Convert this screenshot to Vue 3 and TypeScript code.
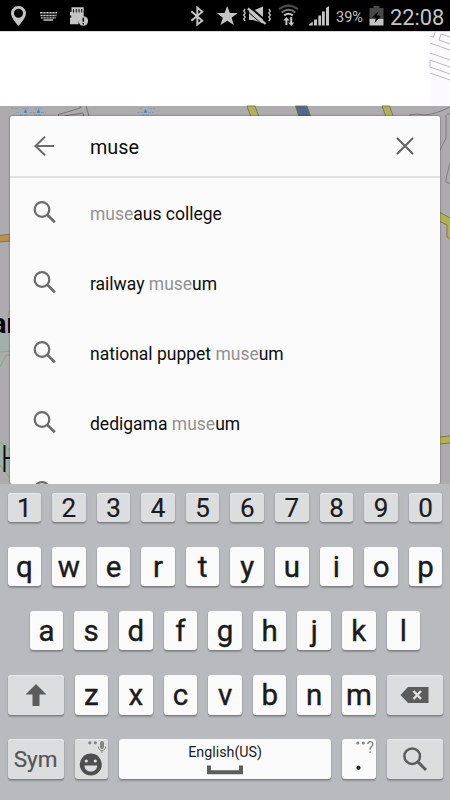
<script setup lang="ts">
interface Part {
  text: string
  typed: boolean
}

const suggestions: Part[][] = [
  [{ text: 'muse', typed: true }, { text: 'aus college', typed: false }],
  [{ text: 'railway ', typed: false }, { text: 'muse', typed: true }, { text: 'um', typed: false }],
  [{ text: 'national puppet ', typed: false }, { text: 'muse', typed: true }, { text: 'um', typed: false }],
  [{ text: 'dedigama ', typed: false }, { text: 'muse', typed: true }, { text: 'um', typed: false }],
  [],
]

const digits: string[] = [...'1234567890']
const topRow: string[] = [...'qwertyuiop']
const homeRow: string[] = [...'asdfghjkl']
const bottomRow: string[] = [...'zxcvbnm']
</script>

<template>
  <div class="screen">
    <header class="status">
      <svg class="status-icons" width="110" height="31" viewBox="0 0 110 31" fill="#c4c4c4">
        <path fill-rule="evenodd" d="M18.500 6C14.300 6 11 9.300 11 13.300C11 18.500 18.500 26 18.500 26S26 18.500 26 13.300C26 9.300 22.700 6 18.500 6ZM18.500 8.800A4.500 4.500 0 1 1 18.500 17.800A4.500 4.500 0 0 1 18.500 8.800Z" />
        <path d="M40 12h17v1.500H40zM40.500 14.800h16v1.500h-16zM41 17.300h15v1.200H41zM43.500 19.300h9.500v1.500h-9.500z" />
        <path d="M43 12v7M46 12v7M49 12v7M52 12v7M55 12v7" stroke="#000" stroke-width=".6" />
        <path d="M71.500 7.300h12.200v10.200c-3.500 0-5.500 2.500-5.200 6.700H70v-6.500h1.200v-2.200H70v-3.500h1.500z" />
        <path d="M73.500 9v3.500M76.200 9v3.500M79 9v3.500M81.700 9v3.500" stroke="#000" stroke-width="1" />
        <circle cx="83.300" cy="21" r="4.800" />
        <path d="M83.300 17.700v4M83.300 22.900v1.500" stroke="#000" stroke-width="1.500" />
      </svg>
      <div class="status-right">
        <svg width="146" height="31" viewBox="187 0 146 31" fill="#c4c4c4">
          <path d="M191.300 11.200l11 9.500-5 3.800V7.500l5 4.200-11 9" fill="none" stroke="#c4c4c4" stroke-width="1.900" />
          <path d="M227.200 6l2.700 7h7.700l-6 4.700 2.300 7.300-6.700-4.300-6.700 4.300 2.300-7.300-6-4.700h7.700z" />
          <path d="M245.200 9l-1.500 2 1.500 2-1.500 2 1.500 2-1.500 2 1.500 2M268.800 9l1.500 2-1.500 2 1.500 2-1.500 2 1.500 2-1.500 2" fill="none" stroke="#c4c4c4" stroke-width="1.300" />
          <path d="M249 10.500h4.500l9.500-4v17l-9.500-3.500H249z" />
          <path d="M249.400 6.500L267.800 22.500" stroke="#000" stroke-width="1.800" />
          <path d="M246.500 10.500L263.500 25.500" stroke="#000" stroke-width="1" />
          <path d="M247.900 8.400L265.600 24" stroke="#c4c4c4" stroke-width="2.200" />
          <g fill="none" stroke-width="2">
            <path d="M279 9.300Q288.500 2 298 9.300" stroke="#4c4c4c" />
            <path d="M281.700 12.500Q288.500 7 295.300 12.500" stroke="#777" />
            <path d="M284.300 15.500Q288.500 12 292.700 15.500" stroke="#c4c4c4" />
          </g>
          <path d="M286.300 17l3.200 3.500h-2.100V25h-2v-4.500h-2.100zM291.300 26l-3.200-3.500h2.100V17h2v5.500h2.100z" />
          <path d="M309 25.500v-1l3.800-3v4zM314 25.500v-6h3v6zM318.300 25.500v-10h2.800v10zM322 25.500V11.500h2.800v14zM326 25.500V8l3-2v19.500z" />
        </svg>
        <span class="percent">39%</span>
        <svg class="battery" width="15" height="31" viewBox="0 0 15 31">
          <path d="M.5 8h4V6h6v2h4v11H.5z" fill="#484848" />
          <path d="M.5 19h14v6.500H.5z" fill="#c4c4c4" />
          <path d="M9.500 11l-6.500 6.500 4 .2L5.500 23l6.500-7-4-.4z" fill="#000" />
        </svg>
        <span class="clock">22:08</span>
      </div>
    </header>

    <main class="content">
      <svg class="map" width="450" height="453" viewBox="0 31 450 453">
        <path fill="#fff" d="M0 31h450v75H0z" />
        <path fill="#fdfaff" d="M430 31h20v75h-20z" />
        <path fill="#d9d9d9" d="M0 31h450v1H0z" />
        <path d="M433 38l2.500-6.500M430 36l3.500 1M441 34l9 3M441 34l-2 6 11 4M430 43l20 7M430 53l20 7M430 60v7M430 60l20 7M430 67l20 7M430 73l20 7" fill="none" stroke="#aaa" stroke-width=".8" />
        <path fill="#aeabaf" d="M0 106h450v378H0z" />
        <g stroke="#518bc3" stroke-width=".8">
          <path d="M11 108.500h7m4 0h8m4 0h9M16 112.500h5m8 0h7m5 0h5M20 115h7m7 0h8M139 108.500h3m7 0h6M137 112.500h6m5 0h6M142 115h8" stroke-dasharray="3 1" opacity=".5" />
          <path d="M24 112.500l1.500-3 1.500 3zM37 112.500l1.500-3 1.500 3zM144 112.500l1.500-3 1.500 3z" fill="#3f83bf" />
        </g>
        <path d="M58.500 117v-2.500l22-6.500-.500-2M86 106l3 10M64 117v-1l19-3 .5 3" fill="none" stroke="#68666a" stroke-width=".8" />
        <g stroke="#6f6b50" stroke-width=".8">
          <path d="M247 106h8l4 11h-8z" fill="#b3b253" />
          <path d="M295.500 106H307l4 11h-12z" fill="#53678d" />
          <path d="M382 106h7.500l4 11h-7.500z" fill="#b3b253" />
          <path d="M-1 235.500l12-1.500v7l-12 1z" fill="#bc914a" />
          <path d="M439 212l12 6.500v21.500l-4-3v-12l-8-4z" fill="#b3b253" />
          <path d="M439 437l12-1v7l-12 1z" fill="#b3b253" />
        </g>
        <path d="M409 115q8-2 16 0 11-1 25-8M446 115v23l-7 14M451 114h-4M451 160q-4 13-5 20-1 4 5 3" fill="none" stroke="#747277" stroke-width=".8" />
        <path d="M0 334h10v17H0zM0 440l10 6v32l-10-13z" fill="#a2b0ac" />
        <path d="M0 352l10-1M0 367l6-12h4M7 317l3-6M0 442l10 8M0 465l10 13" fill="none" stroke="#69b26e" stroke-width=".8" />
        <path d="M4.500 445v27M4.500 458h5.500" stroke="#111" stroke-width="2" fill="none" />
        <text x="-8.500" y="333" class="map-label">ar</text>
      </svg>

      <section class="search-card">
        <div class="search-bar">
          <svg class="back" width="22" height="20" viewBox="0 0 22 20" fill="none" stroke="#6b6b6b" stroke-width="2">
            <path d="M20 10H2M11 .8L1.500 10l9.500 9.200" />
          </svg>
          <span class="query">muse</span>
          <svg class="clear" width="18" height="18" viewBox="0 0 18 18" fill="none" stroke="#626262" stroke-width="2">
            <path d="M1 1l16 16M17 1L1 17" />
          </svg>
        </div>
        <ul class="suggestions">
          <li v-for="(parts, i) in suggestions" :key="i">
            <svg width="24" height="24" viewBox="0 0 24 24" fill="none" stroke="#6b6b6b">
              <circle cx="9" cy="8.500" r="7.300" stroke-width="2.200" />
              <path d="M14 13.500l7.800 7.800" stroke-width="2.700" />
            </svg>
            <span class="line"><span v-for="(part, j) in parts" :key="j" :class="{ typed: part.typed }">{{ part.text }}</span></span>
          </li>
        </ul>
      </section>
    </main>

    <section class="keyboard">
      <div class="row numbers">
        <div v-for="key in digits" :key="key" class="key grey">{{ key }}</div>
      </div>
      <div class="row">
        <div v-for="key in topRow" :key="key" class="key">{{ key }}</div>
      </div>
      <div class="row home">
        <div v-for="key in homeRow" :key="key" class="key">{{ key }}</div>
      </div>
      <div class="row">
        <div class="key grey wide icon">
          <svg width="22" height="24" viewBox="0 0 22 24" fill="#5c5c5c"><path d="M11 1l10.500 10.500h-7V23H7.500V11.500h-7z" /></svg>
        </div>
        <div v-for="key in bottomRow" :key="key" class="key">{{ key }}</div>
        <div class="key grey wide icon">
          <svg width="29" height="18" viewBox="0 0 29 18"><path d="M8 1h20.500v16H8L.500 9z" fill="#5c5c5c" /><path d="M13.500 5l7.500 8M21 5l-7.500 8" stroke="#dedfe1" stroke-width="2.500" /></svg>
        </div>
      </div>
      <div class="row">
        <div class="key grey wide sym">Sym</div>
        <div class="key grey icon">
          <svg width="34" height="40" viewBox="0 0 34 40" fill="#4f4f4f">
            <g fill="#858585"><circle cx="15.800" cy="3.800" r="1.600" /><circle cx="21.300" cy="3.800" r="1.600" /><rect x="26" y="2" width="4" height="8" rx="2" /></g>
            <path d="M24.300 7.500c0 5.300 7.400 5.300 7.400 0M28 11.500V14" fill="none" stroke="#858585" />
            <circle cx="16.800" cy="25.500" r="11" />
            <g fill="#dedfe1"><circle cx="12.300" cy="22" r="1.600" /><circle cx="21.300" cy="22" r="1.600" /><path d="M10.500 26.500h12.600c0 8-12.600 8-12.600 0z" /></g>
          </svg>
        </div>
        <div class="key space">
          <span>English(US)</span>
          <svg width="36" height="10" viewBox="0 0 36 10"><path d="M2 .5v6.800h32V.5" fill="none" stroke="#5c5c5c" stroke-width="4" /></svg>
        </div>
        <div class="key icon">
          <svg width="34" height="40" viewBox="0 0 34 40">
            <circle cx="15.800" cy="4" r="1.600" fill="#858585" /><circle cx="21.300" cy="4" r="1.600" fill="#858585" />
            <text x="24.500" y="14" class="hint">?</text>
            <circle cx="16.500" cy="28.800" r="2.100" fill="#222" />
          </svg>
        </div>
        <div class="key grey wide icon">
          <svg width="26" height="26" viewBox="0 0 26 26" fill="none" stroke="#5c5c5c"><circle cx="10.200" cy="10.200" r="7.800" stroke-width="2.500" /><path d="M15.500 15.500l8.500 8.500" stroke-width="3" /></svg>
        </div>
      </div>
    </section>
  </div>
</template>

<style>
body {
  margin: 0;
  overflow: hidden;
}
</style>

<style scoped>
.screen {
  width: 450px;
  height: 800px;
  display: flex;
  flex-direction: column;
  overflow: hidden;
  font-family: Roboto, 'Liberation Sans', sans-serif;
}
svg {
  display: block;
  flex: none;
}
.status {
  height: 31px;
  flex: none;
  display: flex;
  justify-content: space-between;
  background: #000;
  color: #c4c4c4;
}
.status-right {
  display: flex;
  width: 263px;
  align-items: center;
}
.percent {
  width: 33px;
  margin-left: 3px;
  font-size: 14.500px;
  line-height: 31px;
  padding-top: 3px;
}
.percent,
.clock {
  flex: none;
  white-space: nowrap;
}
.battery {
  margin-right: 6px;
}
.clock {
  font-size: 21.800px;
  line-height: 31px;
  padding-top: 3px;
}
.content {
  height: 453px;
  flex: none;
  display: grid;
  overflow: hidden;
}
.map,
.search-card {
  grid-area: 1 / 1;
}
.map-label {
  font-size: 28px;
  font-weight: 700;
  fill: #050505;
}
.search-card {
  z-index: 1;
  width: 430px;
  height: 368px;
  margin: 85px 0 0 10px;
  overflow: hidden;
  border-radius: 2px;
  background: #fafafa;
  box-shadow: 0 0 2px rgba(0, 0, 0, 0.6);
  color: #0c0c0c;
}
.search-bar {
  height: 60px;
  display: flex;
  align-items: center;
  border-bottom: 2px solid #e1e1e1;
}
.back {
  margin-left: 24px;
}
.query {
  width: 306px;
  margin-left: 34px;
  padding-top: 3px;
  font-size: 19.800px;
}
.suggestions {
  margin: 0;
  padding: 0;
  list-style: none;
}
.suggestions li {
  height: 70px;
  display: flex;
  align-items: center;
  padding-left: 23px;
}
.line {
  margin-left: 33px;
  padding-top: 1px;
  font-size: 17.500px;
  white-space: pre;
}
.typed {
  color: #929292;
}
.keyboard {
  flex: 1;
  display: flex;
  flex-direction: column;
  gap: 24.500px;
  padding: 8.500px 7.500px 0;
  background: #b9babe;
}
.row {
  display: flex;
  gap: 11px;
  height: 39.700px;
  flex: none;
}
.numbers {
  height: 29.500px;
}
.home {
  padding: 0 22.300px;
}
.key {
  box-sizing: border-box;
  width: 33.600px;
  flex: none;
  display: flex;
  align-items: center;
  justify-content: center;
  padding-top: 2px;
  border-radius: 3px;
  background: #fafafa;
  box-shadow: 0 1px 1px #7d7e81, 0 2px 2px rgba(0, 0, 0, 0.2);
  color: #1b1b1b;
  font-size: 29.500px;
  font-weight: 400;
  line-height: 1;
  -webkit-text-stroke: 0.4px #1b1b1b;
}
.grey {
  background: #dcdddf;
  box-shadow: inset 0 1px #e7e8e9, 0 1px 1px #7d7e81, 0 2px 2px rgba(0, 0, 0, 0.2);
}
.key.icon {
  padding-top: 0;
  -webkit-text-stroke: 0;
}
.numbers .key {
  font-size: 26px;
  -webkit-text-stroke: 0.2px #1b1b1b;
}
.key.wide {
  width: 56px;
}
.key.sym {
  padding-top: 1px;
  color: #555;
  font-size: 22.500px;
  -webkit-text-stroke: 0.2px #555;
}
.key.space {
  width: 212px;
  padding-top: 2px;
  flex-direction: column;
  gap: 5px;
  -webkit-text-stroke: 0;
}
.space span {
  font-size: 14.300px;
}
.hint {
  fill: #858585;
  font-size: 16px;
}
</style>
